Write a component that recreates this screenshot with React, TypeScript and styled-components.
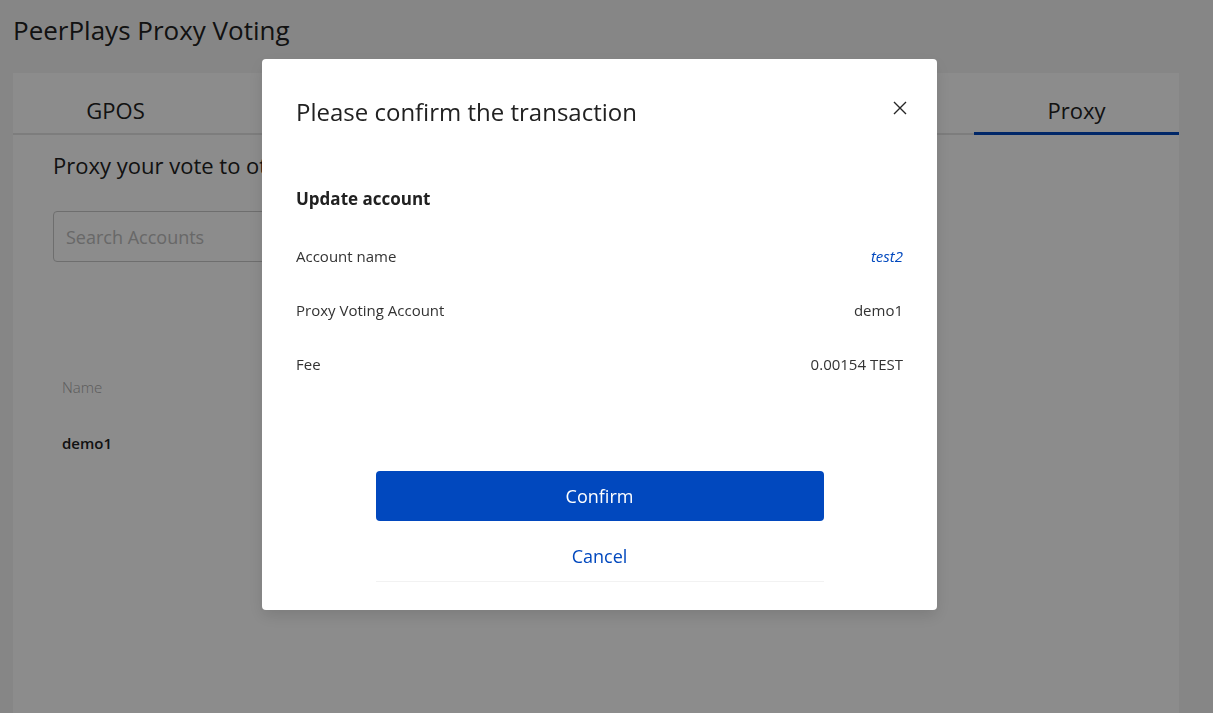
import React from 'react';
import styled, { createGlobalStyle } from 'styled-components';

const GlobalStyle = createGlobalStyle`
  html, body {
    margin: 0;
    padding: 0;
    background: #f5f5f5;
    font-family: 'Open Sans', 'Noto Sans', sans-serif;
    color: #212121;
    overflow: hidden;
  }
  * {
    box-sizing: border-box;
  }
`;

const tabs = ['GPOS', 'Proxy'];

const rows = [
  { label: 'Account name', value: 'test2', link: true },
  { label: 'Proxy Voting Account', value: 'demo1' },
  { label: 'Fee', value: '0.00154 TEST' },
];

const App: React.FC = () => {
  return (
    <>
      <GlobalStyle />
      <StyledPage>
        <StyledTitle>PeerPlays Proxy Voting</StyledTitle>
        <StyledCard>
          <StyledTabs>
            {tabs.map((tab) => (
              <StyledTab key={tab} active={tab === 'Proxy'}>
                {tab}
              </StyledTab>
            ))}
          </StyledTabs>
          <StyledPanel>
            <StyledPanelTitle>Proxy your vote to other accounts</StyledPanelTitle>
            <StyledSearch placeholder="Search Accounts" />
            <StyledTable>
              <StyledHeadCell>Name</StyledHeadCell>
              <StyledNameCell>demo1</StyledNameCell>
            </StyledTable>
          </StyledPanel>
        </StyledCard>
      </StyledPage>

      <StyledMask>
        <StyledModal>
          <StyledModalHeader>
            <StyledModalTitle>Please confirm the transaction</StyledModalTitle>
            <StyledClose aria-label="Close">
              <svg width="14" height="14" viewBox="0 0 14 14">
                <path d="M1 1L13 13M13 1L1 13" stroke="#262626" strokeWidth="1.4" fill="none" />
              </svg>
            </StyledClose>
          </StyledModalHeader>
          <StyledSection>Update account</StyledSection>
          <StyledRows>
            {rows.map((row) => (
              <StyledRow key={row.label}>
                <span>{row.label}</span>
                <StyledValue link={row.link}>{row.value}</StyledValue>
              </StyledRow>
            ))}
          </StyledRows>
          <StyledActions>
            <StyledConfirm>Confirm</StyledConfirm>
            <StyledCancel>Cancel</StyledCancel>
          </StyledActions>
        </StyledModal>
      </StyledMask>
    </>
  );
};

const StyledPage = styled.div`
  padding: 13px 34px 0 13px;
  min-height: 713px;
  display: flex;
  flex-direction: column;
`;

const StyledTitle = styled.h1`
  margin: 0;
  font-size: 26px;
  font-weight: 400;
  line-height: 34px;
  color: #212121;
`;

const StyledCard = styled.div`
  margin-top: 26px;
  flex: 1;
  background: #fff;
  display: flex;
  flex-direction: column;
`;

const StyledTabs = styled.div`
  display: flex;
  justify-content: space-between;
  border-bottom: 2px solid #e4e4e4;
`;

const StyledTab = styled.div<{ active?: boolean }>`
  width: 205px;
  height: 62px;
  display: flex;
  align-items: flex-end;
  justify-content: center;
  padding-bottom: 7px;
  font-size: 22px;
  line-height: 30px;
  color: #212121;
  margin-bottom: -2px;
  border-bottom: 3px solid ${(props) => (props.active ? '#0148be' : 'transparent')};
`;

const StyledPanel = styled.div`
  padding: 14px 40px;
  display: flex;
  flex-direction: column;
`;

const StyledPanelTitle = styled.h2`
  margin: 0;
  font-size: 22px;
  font-weight: 400;
  line-height: 32px;
  color: #212121;
`;

const StyledSearch = styled.input`
  margin-top: 30px;
  width: 420px;
  height: 51px;
  border: 1px solid #c8c8c8;
  border-radius: 4px;
  padding: 0 12px;
  font-family: inherit;
  font-size: 18px;
  &::placeholder {
    color: #bdbdbd;
  }
`;

const StyledTable = styled.div`
  margin-top: 114px;
  padding-left: 9px;
  display: flex;
  flex-direction: column;
  gap: 34px;
`;

const StyledHeadCell = styled.div`
  font-size: 15px;
  font-weight: 300;
  line-height: 22px;
  color: #a8a8a8;
`;

const StyledNameCell = styled.div`
  font-size: 15px;
  font-weight: 600;
  line-height: 22px;
  color: #212121;
`;

const StyledMask = styled.div`
  position: fixed;
  inset: 0;
  background: rgba(0, 0, 0, 0.45);
  display: flex;
  justify-content: center;
  align-items: flex-start;
  padding: 59px 14px 0 0;
`;

const StyledModal = styled.div`
  width: 675px;
  background: #fff;
  border-radius: 4px;
  box-shadow: 0 6px 16px rgba(0, 0, 0, 0.12);
  padding: 37px 34px 28px;
  display: flex;
  flex-direction: column;
`;

const StyledModalHeader = styled.div`
  display: flex;
  align-items: center;
  justify-content: space-between;
`;

const StyledModalTitle = styled.h3`
  margin: 0;
  font-size: 24px;
  font-weight: 400;
  line-height: 32px;
  color: #212121;
`;

const StyledClose = styled.button`
  border: 0;
  background: none;
  padding: 0;
  margin-right: -4px;
  margin-top: -8px;
  display: flex;
  cursor: pointer;
`;

const StyledSection = styled.div`
  margin-top: 59px;
  font-size: 17px;
  font-weight: 700;
  line-height: 24px;
  color: #212121;
`;

const StyledRows = styled.div`
  margin-top: 18px;
  display: flex;
  flex-direction: column;
`;

const StyledRow = styled.div`
  height: 54px;
  display: flex;
  align-items: center;
  justify-content: space-between;
  font-size: 15px;
  color: #333;
`;

const StyledValue = styled.span<{ link?: boolean }>`
  color: ${(props) => (props.link ? '#0148be' : '#333')};
  font-style: ${(props) => (props.link ? 'italic' : 'normal')};
`;

const StyledActions = styled.div`
  margin-top: 80px;
  width: 448px;
  align-self: center;
  display: flex;
  flex-direction: column;
  gap: 10px;
`;

const StyledConfirm = styled.button`
  height: 50px;
  border: 0;
  border-radius: 4px;
  background: #0148be;
  color: #fff;
  font-family: inherit;
  font-size: 18px;
  cursor: pointer;
`;

const StyledCancel = styled.button`
  height: 51px;
  border: 0;
  border-bottom: 1px solid #f2f2f2;
  background: none;
  color: #0148be;
  font-family: inherit;
  font-size: 18px;
  cursor: pointer;
`;

export default App;
